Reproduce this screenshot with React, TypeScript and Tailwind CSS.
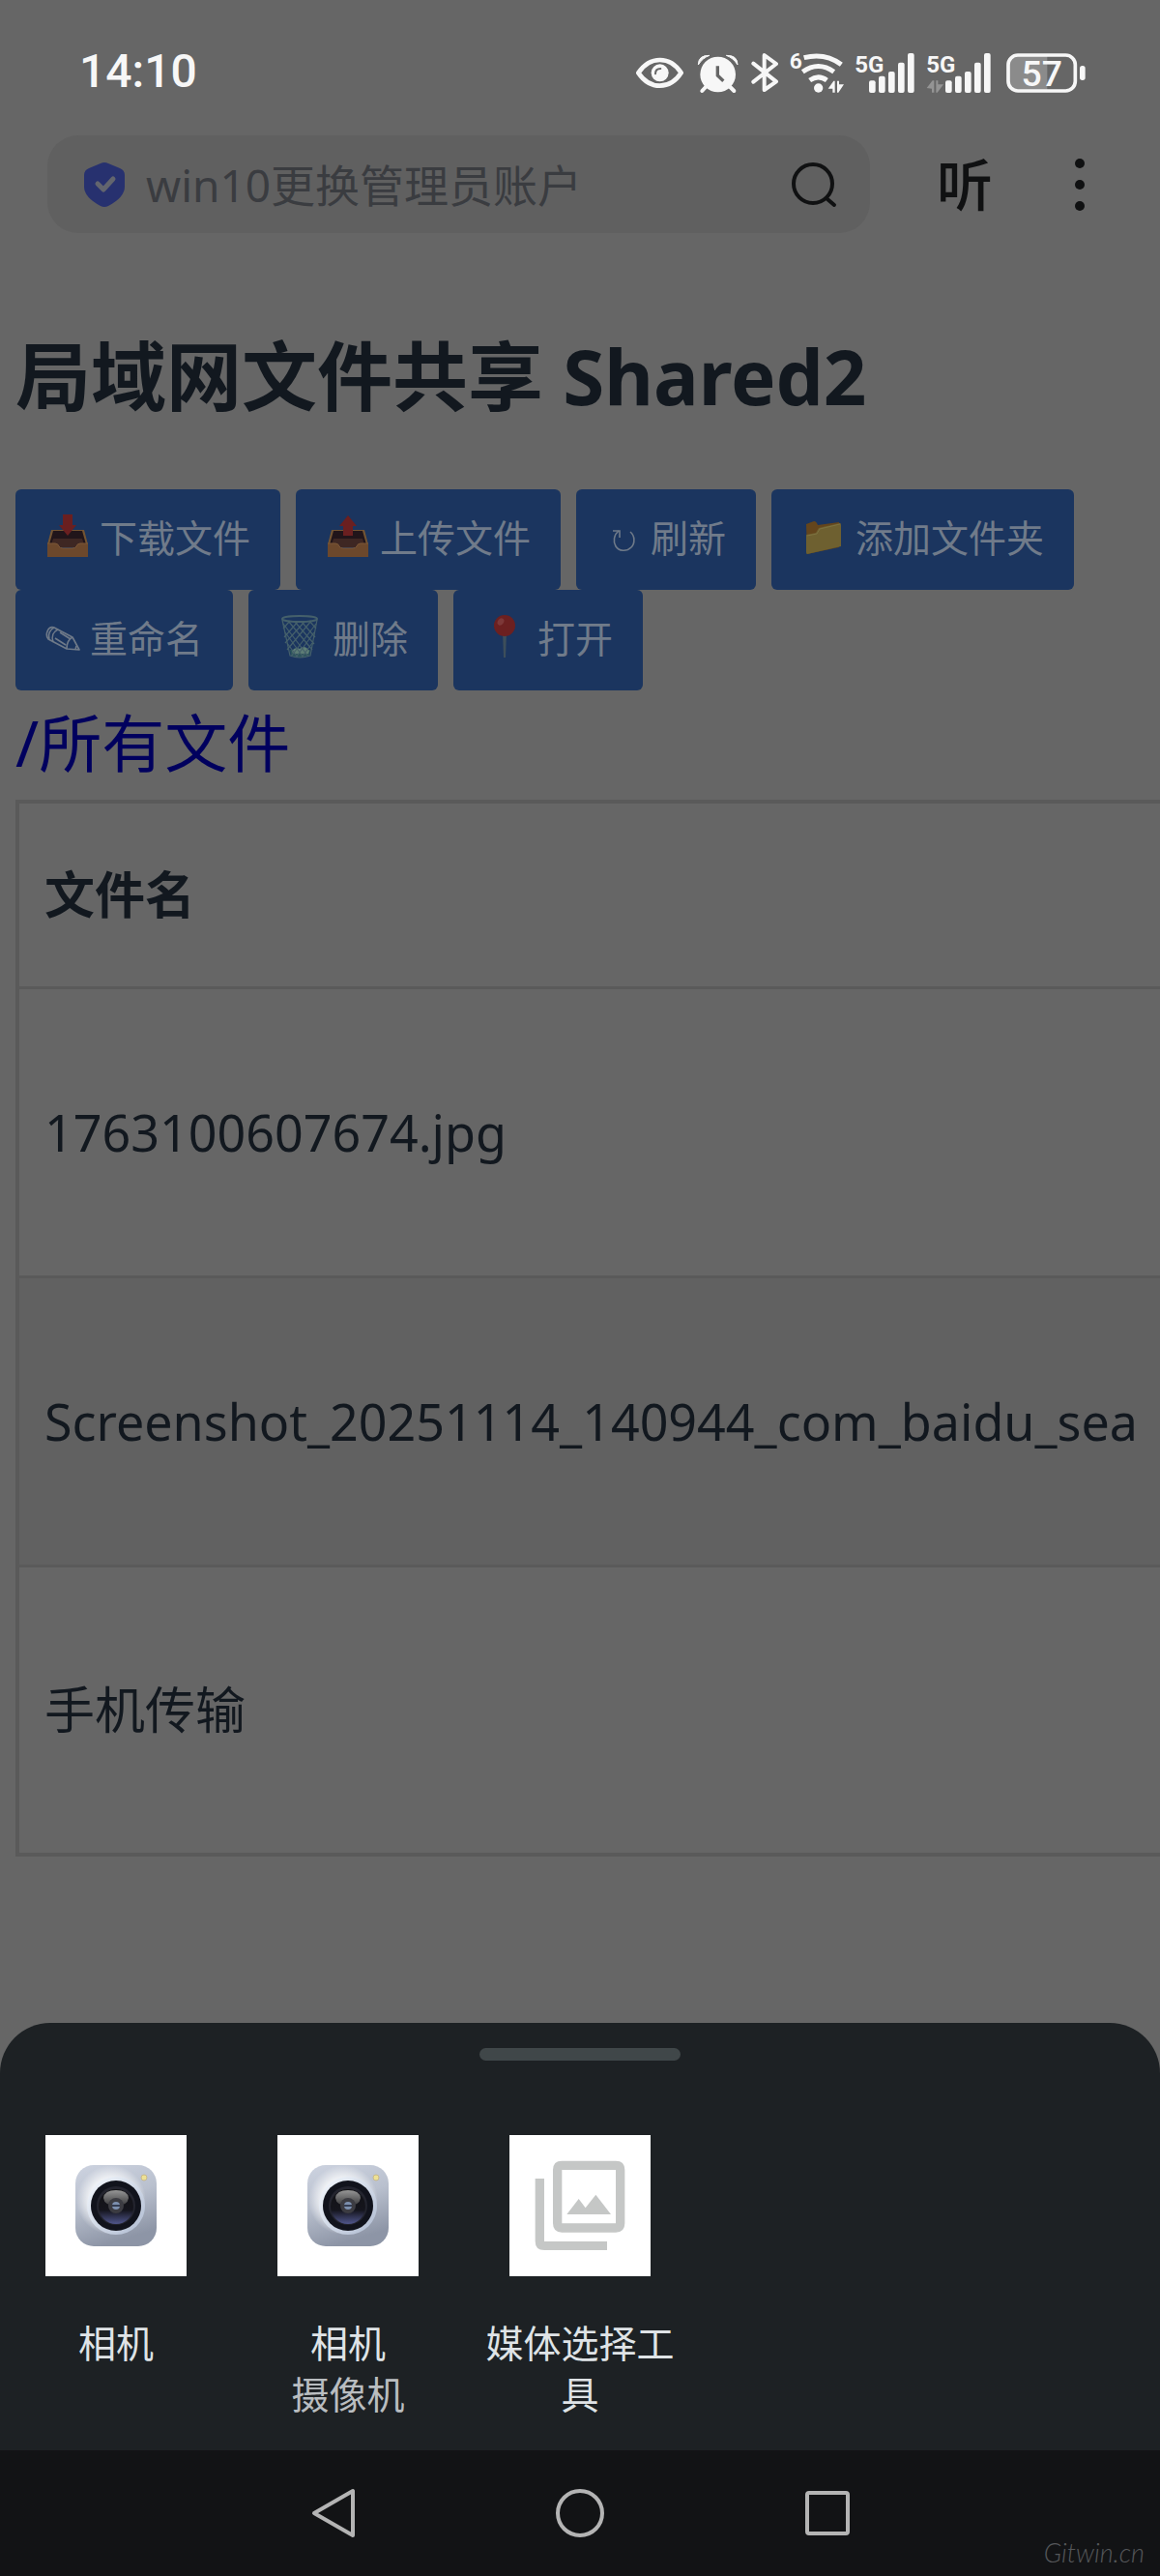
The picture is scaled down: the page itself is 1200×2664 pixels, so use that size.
import type { ReactNode } from "react";

type Icon = () => ReactNode;

/* ---------- Status bar icons ---------- */

const StatusIcons = () => (
  <div className="flex items-center gap-3 fill-[#f7f7f7] text-[#f7f7f7]">
    {/* Eye comfort */}
    <svg className="h-[45px] w-[51px]" viewBox="54 60 153 135" fill="none" stroke="currentColor">
      <path d="M61 130 C80 102 103 90 128 90 C153 90 176 102 194 130 C176 158 153 170 128 170 C103 170 80 158 61 130Z" fill="none" strokeWidth="14" strokeLinejoin="round" />
      <circle cx="128" cy="130" r="27" fill="currentColor" stroke="none" />
      <path d="M114 133 C114 123 120 117 130 117" fill="none" stroke="#666" strokeWidth="6" strokeLinecap="round" />
    </svg>
    {/* Alarm */}
    <svg className="h-[45px] w-[44px]" viewBox="243 60 132 135">
      <circle cx="308" cy="135" r="55" />
      <path d="M247 105 Q247 75 282 76 Q260 84 247 105Z M369 105 Q369 75 334 76 Q356 84 369 105Z" stroke="currentColor" strokeWidth="3" strokeLinejoin="round" />
      <path d="M270 174 L259 186 M346 174 L358 186" stroke="currentColor" strokeWidth="12" strokeLinecap="round" />
      <path d="M307 109 V138 L325 155" fill="none" stroke="#666" strokeWidth="10" />
    </svg>
    {/* Bluetooth */}
    <svg className="h-[45px] w-[29px]" viewBox="411 60 87 135" stroke="currentColor" strokeWidth="12" strokeLinejoin="round" strokeLinecap="round">
      <path d="M418 101 L489 157 L452 183 V75 L489 102 L418 158" fill="none" />
    </svg>
    {/* Wi-Fi 6 */}
    <svg className="h-[45px] w-[55px] overflow-visible" viewBox="534 60 165 135">
      <text x="530" y="117" fontSize="68" fontWeight="700" className="font-['Roboto',sans-serif]">6</text>
      <g fill="none" stroke="currentColor" strokeWidth="15">
        <path d="M575 83 Q640 66 691 104" />
        <path d="M571 127 Q620 92 668 127" />
        <path d="M593 153 Q620 134 646 153" />
      </g>
      <circle cx="620" cy="177" r="14" />
      <path d="M650 179 L667 155 H671 V191 H664 V179Z M678 155 H684 V166 H699 L682 191 H678Z" />
    </svg>
    {/* SIM 1 */}
    <svg className="h-[45px] w-[61px] overflow-visible" viewBox="735 60 183 135">
      <text x="733" y="129" fontSize="72" fontWeight="700" className="font-['Roboto',sans-serif]">5G</text>
      <rect x="777" y="154" width="20" height="38" rx="6" />
      <rect x="807" y="140" width="20" height="52" rx="6" />
      <rect x="837" y="126" width="20" height="66" rx="6" />
      <rect x="867" y="98" width="20" height="94" rx="6" />
      <rect x="897" y="69" width="20" height="123" rx="6" />
    </svg>
    {/* SIM 2 */}
    <svg className="h-[45px] w-[67px] overflow-visible" viewBox="954 60 201 135">
      <text x="955" y="129" fontSize="72" fontWeight="700" className="font-['Roboto',sans-serif]">5G</text>
      <path d="M956 177 L974 154 H979 V191 H972 V179Z M985 154 H991 V166 H1008 L989 191 H985Z" className="fill-[#949494]" />
      <rect x="1014" y="154" width="20" height="38" rx="6" />
      <rect x="1044" y="140" width="20" height="52" rx="6" />
      <rect x="1074" y="126" width="20" height="66" rx="6" />
      <rect x="1104" y="98" width="20" height="94" rx="6" />
      <rect x="1134" y="69" width="20" height="123" rx="6" />
    </svg>
    {/* Battery */}
    <svg className="h-[45px] w-[86px]" viewBox="1191 60 258 135">
      <path d="M1330 76 H1240 Q1210 76 1210 106 V155 Q1210 185 1240 185 H1330Z" className="fill-[#8b8b8b]" />
      <rect x="1209" y="75" width="208" height="111" rx="30" fill="none" stroke="currentColor" strokeWidth="11" />
      <rect x="1431" y="108" width="17" height="45" rx="8" />
      <text x="1313" y="172" fontSize="112" fontWeight="500" textAnchor="middle" className="font-['Roboto',sans-serif]">57</text>
    </svg>
  </div>
);

/* ---------- Toolbar icons ---------- */

const Tray = ({ children }: { children: ReactNode }) => (
  <svg className="size-12 shrink-0" viewBox="0 0 48 48">
    <path d="M6 16 H40 L44 31 H2Z" fill="#735433" />
    <path d="M8 17 H38 L42 31 H4Z" fill="#21151a" />
    <path d="M8 25 H38 L41 34 H5Z" fill="#3e2723" />
    <path d="M2 30 H10 Q13 30 14 33 Q15 35 18 35 H28 Q31 35 32 33 Q33 30 36 30 H44 V44 H2Z" fill="#6c482c" />
    <path d="M2 30 H10 Q13 30 14 33 Q15 35 18 35 H28 Q31 35 32 33 Q33 30 36 30 H44" fill="none" stroke="#7d5838" strokeWidth="1" />
    {children}
  </svg>
);

const DownloadIcon: Icon = () => (
  <Tray>
    <path d="M18 0 H28 V11 H32 L23 22 L14 11 H18Z" fill="#6a1f20" />
  </Tray>
);

const UploadIcon: Icon = () => (
  <Tray>
    <path d="M18 22 H28 V12 H32 L23 1 L14 12 H18Z" fill="#6a1f20" />
  </Tray>
);

const RefreshIcon: Icon = () => (
  <svg className="h-12 w-[38px] shrink-0" viewBox="0 0 38 48" fill="none" stroke="#6f7a89" strokeWidth="1.6">
    <path d="M25 18 C30 22 30 30 26 34 C21 39 13 38 10 33 C7 28 8 21 13 17" />
    <path d="M7 17 H14 V24" />
  </svg>
);

const FolderIcon: Icon = () => (
  <svg className="size-12 shrink-0" viewBox="0 0 48 48">
    <path d="M5 10 L13 7 Q15 7 16 9 L17 11 L39 8 V34 L6 41Z" fill="#64451c" />
    <path d="M5 21 L15 19 L18 14 L40 9 Q41 9 41 11 V33 L6 41 Q5 41 5 39Z" fill="#6e6030" />
    <path d="M6 22 L16 20 L19 15 L40 10" fill="none" stroke="#7d713f" strokeWidth="1" />
  </svg>
);

const PencilIcon: Icon = () => (
  <svg className="h-12 w-[38px] shrink-0" viewBox="0 0 38 48" fill="none" stroke="#6f7a89" strokeWidth="1.6" strokeLinejoin="round">
    <path d="M9 13 L28 23 L35 36 L22 35 L3 25 C-1 20 3 11 9 13Z" />
    <path d="M9 13 C5 15 2 20 4 25 M13 15 C8 17 6 22 8 28 M28 23 C24 25 22 30 22 35 M15 18 L26 25 M10 24 L21 31 M32 32 L31 36" />
  </svg>
);

const TrashIcon: Icon = () => (
  <svg className="size-12 shrink-0" viewBox="0 0 48 48" fill="none" stroke="#45606b" strokeWidth="1.2">
    <path d="M12 36 H33 L32 42 Q23 46 13 42Z" fill="#2d545c" stroke="none" />
    <path d="M14 37 Q18 32 22 35 Q27 30 32 37 L31 40 H15Z" fill="#5d7d75" stroke="none" />
    <ellipse cx="22" cy="4" rx="18" ry="3" strokeWidth="2" />
    <path d="M4 5 L12 42 Q22 46 33 42 L40 5" />
    <path d="M5 9 L31 43 M10 6 L35 36 M17 7 L37 30 M24 7 L38 23 M32 6 L39 14 M7 18 L26 44 M9 29 L20 44 M39 9 L13 43 M34 6 L9 36 M27 7 L7 29 M20 7 L6 23 M12 6 L5 14 M37 18 L18 44 M35 29 L24 44" />
  </svg>
);

const PinIcon: Icon = () => (
  <svg className="size-12 shrink-0" viewBox="0 0 48 48">
    <path d="M20 18 H24 L23 44 H21Z" fill="#3d4e5a" />
    <circle cx="22" cy="11" r="11" fill="#6c2020" />
    <ellipse cx="18" cy="7" rx="3" ry="4" fill="#7d3838" transform="rotate(35 18 7)" />
  </svg>
);

const actions: { label: string; icon: Icon }[] = [
  { label: "下载文件", icon: DownloadIcon },
  { label: "上传文件", icon: UploadIcon },
  { label: "刷新", icon: RefreshIcon },
  { label: "添加文件夹", icon: FolderIcon },
  { label: "重命名", icon: PencilIcon },
  { label: "删除", icon: TrashIcon },
  { label: "打开", icon: PinIcon },
];

const files = [
  "1763100607674.jpg",
  "Screenshot_20251114_140944_com_baidu_sea",
  "手机传输",
];

/* ---------- Chooser sheet ---------- */

const CameraIcon: Icon = () => (
  <svg className="size-[146px] bg-white" viewBox="0 0 146 146">
    <defs>
      <linearGradient id="body" x1="0" y1="0" x2="0.3" y2="1">
        <stop offset="0" stopColor="#cdd3e0" />
        <stop offset="0.5" stopColor="#b9c0ce" />
        <stop offset="1" stopColor="#8d95a6" />
      </linearGradient>
      <radialGradient id="glow">
        <stop offset="0.6" stopColor="#fff" stopOpacity="0.8" />
        <stop offset="1" stopColor="#fff" stopOpacity="0" />
      </radialGradient>
      <linearGradient id="ring" x1="0" y1="0" x2="1" y2="1">
        <stop offset="0" stopColor="#f6faff" />
        <stop offset="1" stopColor="#aebad0" />
      </linearGradient>
      <linearGradient id="glass" x1="0" y1="0" x2="0" y2="1">
        <stop offset="0" stopColor="#111114" />
        <stop offset="0.6" stopColor="#15151d" />
        <stop offset="1" stopColor="#50568c" />
      </linearGradient>
      <linearGradient id="shine" x1="0" y1="0" x2="0" y2="1">
        <stop offset="0" stopColor="#969696" />
        <stop offset="1" stopColor="#3a3a3c" />
      </linearGradient>
    </defs>
    <rect x="31" y="31" width="84" height="84" rx="19" fill="url(#body)" />
    <circle cx="68" cy="67" r="36" fill="url(#glow)" />
    <circle cx="73" cy="73" r="30" fill="url(#ring)" />
    <circle cx="73" cy="73" r="26" fill="#11131c" />
    <circle cx="73" cy="73" r="20" fill="#23242e" />
    <circle cx="73" cy="74" r="18" fill="url(#glass)" />
    <path d="M60 65 Q61 57 73 57 Q85 57 86 65 Q85 73 73 73 Q61 73 60 65Z" fill="url(#shine)" />
    <circle cx="73" cy="73" r="8" fill="#3c3c42" />
    <circle cx="73" cy="73" r="4" fill="#7c8fae" />
    <path d="M69 73 H77" stroke="#1c2233" strokeWidth="1.5" />
    <circle cx="102" cy="44" r="3" fill="#eee194" stroke="#c8b98a" strokeWidth="1" />
  </svg>
);

const MediaIcon: Icon = () => (
  <svg className="size-[146px] bg-white" viewBox="81 84 438 438" fill="#c5c7c6">
    <path d="M244 164 H411 Q439 164 439 192 V358 Q439 386 411 386 H244 Q216 386 216 358 V192 Q216 164 244 164Z M244 192 V358 H411 V192Z" fillRule="evenodd" />
    <path d="M161 219 H189 V414 H384 V441 H189 Q161 441 161 413Z" />
    <path d="M259 330 L296 282 L317 310 L349 269 L396 330Z" />
  </svg>
);

const targets: { label: string; note?: string; icon: Icon }[] = [
  { label: "相机", icon: CameraIcon },
  { label: "相机", note: "摄像机", icon: CameraIcon },
  { label: "媒体选择工具", icon: MediaIcon },
];

const ChooserSheet = () => (
  <section className="rounded-t-[52px] bg-[#1d2124] pt-[26px]">
    <div className="mx-auto h-[13px] w-52 rounded-full bg-[#404749]" />
    <div className="grid h-[403px] grid-cols-5 pt-[77px]">
      {targets.map(({ label, note, icon: TargetIcon }, index) => (
        <button key={index} className="flex flex-col items-center px-5">
          <TargetIcon />
          <span className="mt-[42px] text-[39px] leading-[53px] text-[#dfe3e6]">{label}</span>
          {note && <span className="text-[39px] leading-[53px] text-[#b9bdc0]">{note}</span>}
        </button>
      ))}
    </div>
  </section>
);

const NavigationBar = () => (
  <nav className="relative flex h-[130px] items-center justify-center gap-[204px] bg-[#121315]">
    <button aria-label="返回">
      <svg className="size-[52px]" viewBox="0 0 52 52" fill="none" stroke="#b4b4b4" strokeWidth="4" strokeLinejoin="round">
        <path d="M47 3 V49 L7 26Z" />
      </svg>
    </button>
    <button aria-label="主屏幕">
      <svg className="size-[52px]" viewBox="0 0 52 52" fill="none" stroke="#b4b4b4" strokeWidth="4">
        <circle cx="26" cy="26" r="23" />
      </svg>
    </button>
    <button aria-label="最近任务">
      <svg className="size-[52px]" viewBox="0 0 52 52" fill="none" stroke="#b4b4b4" strokeWidth="4">
        <rect x="5" y="5" width="42" height="42" rx="2" />
      </svg>
    </button>
    <span className="absolute right-4 bottom-1 font-['Lato',sans-serif] text-[27px] font-light text-[#55575a] italic">Gitwin.cn</span>
  </nav>
);

export default function App() {
  return (
    <div className="flex min-h-screen flex-col overflow-hidden bg-[#666] font-['Noto_Sans','Noto_Sans_CJK_SC',sans-serif] text-[#12181f]">
      <div className="flex items-center justify-between pt-[50px] pr-[77px] pl-[82px]">
        <span className="font-['Roboto',sans-serif] text-[48px] leading-[48px] font-medium text-[#f7f7f7]">14:10</span>
        <StatusIcons />
      </div>

      <header className="mt-[42px] flex items-center pr-[78px] pl-[49px]">
        <label className="flex h-[101px] min-w-0 flex-1 items-center rounded-[32px] bg-[#606060] pr-[33px] pl-[38px]">
          <svg className="h-[46px] w-[42px] shrink-0" viewBox="0 0 42 46">
            <path d="M21 0 Q23 0 25 1 L37 6 Q42 8 42 13 V25 Q42 36 25 45 Q21 47 17 45 Q0 36 0 25 V13 Q0 8 5 6 L17 1 Q19 0 21 0Z" fill="#27316f" />
            <path d="M14 22 L20 28 L30 17" fill="none" stroke="#62656e" strokeWidth="5" strokeLinecap="round" strokeLinejoin="round" />
          </svg>
          <input
            type="text"
            aria-label="搜索"
            defaultValue="win10更换管理员账户"
            className="ml-[22px] min-w-0 flex-1 bg-transparent text-[46px] leading-[60px] text-[#3a3c40] outline-none"
          />
          <svg className="size-12 shrink-0" viewBox="0 0 48 48" fill="none" stroke="#101112" strokeWidth="4" strokeLinecap="round">
            <circle cx="22" cy="23" r="20" />
            <path d="M37 39 L44 45" />
          </svg>
        </label>
        <button className="ml-[69px] text-[58px] leading-[60px] font-medium text-[#101112]">听</button>
        <button aria-label="更多" className="ml-[85px] flex flex-col gap-3">
          <span className="size-[10px] rounded-full bg-[#101112]" />
          <span className="size-[10px] rounded-full bg-[#101112]" />
          <span className="size-[10px] rounded-full bg-[#101112]" />
        </button>
      </header>

      <main className="flex-1 pl-4">
        <h1 className="mt-[100px] mb-[69px] text-[78px] leading-[96px] font-bold">局域网文件共享 Shared2</h1>

        <div className="flex flex-wrap gap-x-4 pr-4">
          {actions.map(({ label, icon: ActionIcon }) => (
            <button key={label} className="flex h-[104px] items-center gap-2 rounded-md bg-[#1b355f] px-[31px] pb-1 text-[39px] text-[#707b8a]">
              <ActionIcon />
              {label}
            </button>
          ))}
        </div>

        <a href="#" className="block pb-1 text-[65px] leading-[109px] text-[#00005e]">/所有文件</a>

        <table className="w-full border-collapse border-4 border-[#5a5a5a] text-left text-[52px] whitespace-nowrap">
          <thead>
            <tr className="h-[192px]">
              <th className="border-[3px] border-[#5a5a5a] px-[26px] font-bold">文件名</th>
            </tr>
          </thead>
          <tbody>
            {files.map((file) => (
              <tr key={file} className="h-[299px] even:bg-[#616161]">
                <td className="border-[3px] border-[#5a5a5a] pr-16 pl-[26px]">{file}</td>
              </tr>
            ))}
          </tbody>
        </table>
      </main>

      <ChooserSheet />
      <NavigationBar />
    </div>
  );
}
